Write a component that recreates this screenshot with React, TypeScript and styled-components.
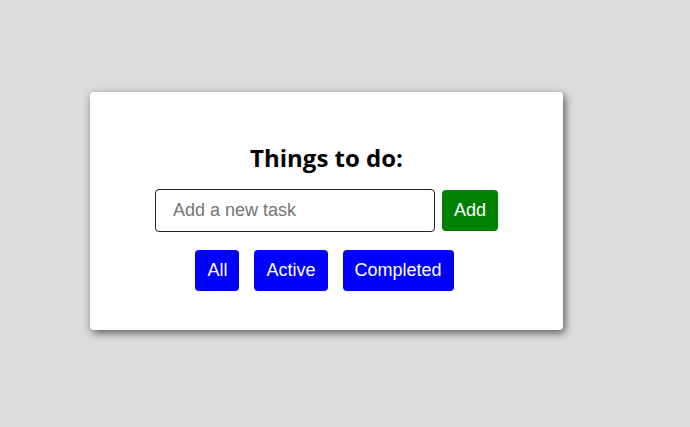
import React from "react";
import styled, { createGlobalStyle } from "styled-components";

const GlobalStyle = createGlobalStyle`
  html, body {
    margin: 0;
    padding: 0;
    background: #dcdcdc;
  }
  body {
    font-family: "Liberation Sans", Arial, sans-serif;
  }
`;

const Page = styled.div`
  min-height: 427px;
  padding: 92px 0 0 90px;
  box-sizing: border-box;
`;

const Card = styled.div`
  width: 473px;
  height: 238px;
  box-sizing: border-box;
  background: #ffffff;
  border-radius: 4px;
  box-shadow: 2px 3px 8px rgba(0, 0, 0, 0.6);
  display: flex;
  flex-direction: column;
  align-items: center;
  padding-top: 50px;
`;

const Title = styled.h1`
  margin: 0 0 15px;
  font-family: "Open Sans", "Noto Sans", sans-serif;
  font-weight: 700;
  font-size: 24px;
  line-height: 32px;
  color: #000;
`;

const AddRow = styled.form`
  display: flex;
  align-items: center;
  gap: 7px;
  margin: 0 0 18px;
`;

const TaskInput = styled.input`
  width: 280px;
  height: 43px;
  box-sizing: border-box;
  border: 1px solid #222;
  border-radius: 4px;
  padding: 0 17px;
  font-family: "Liberation Sans", Arial, sans-serif;
  font-size: 18px;
  color: #000;
  outline: none;
  &::placeholder {
    color: #757575;
  }
`;

const Button = styled.button<{ $tone: "green" | "blue" }>`
  height: 41px;
  box-sizing: border-box;
  padding: 0 12px;
  border: none;
  border-radius: 4px;
  background: ${(p) => (p.$tone === "green" ? "#008000" : "#0000ff")};
  color: #ffffff;
  font-family: "Liberation Sans", Arial, sans-serif;
  font-size: 18px;
  cursor: pointer;
`;

const Filters = styled.div`
  display: flex;
  gap: 15px;
  padding-right: 4px;
`;

export default function App() {
  return (
    <>
      <GlobalStyle />
      <Page>
        <Card>
          <Title>Things to do:</Title>
          <AddRow onSubmit={(e) => e.preventDefault()}>
            <TaskInput type="text" placeholder="Add a new task" />
            <Button $tone="green" type="submit">Add</Button>
          </AddRow>
          <Filters>
            <Button $tone="blue" type="button">All</Button>
            <Button $tone="blue" type="button">Active</Button>
            <Button $tone="blue" type="button">Completed</Button>
          </Filters>
        </Card>
      </Page>
    </>
  );
}
